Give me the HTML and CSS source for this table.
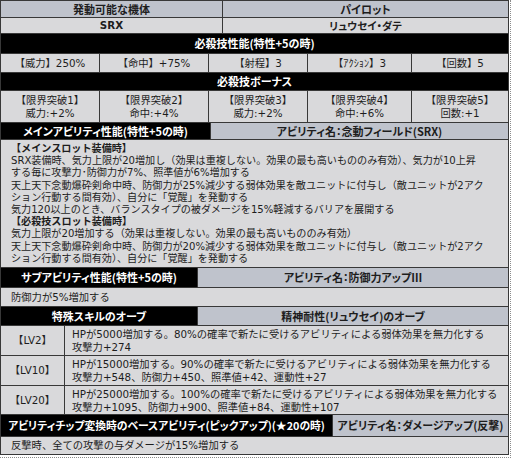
FILE: index.html
```html
<!DOCTYPE html>
<html lang="ja">
<head>
<meta charset="utf-8">
<title>SRX</title>
<link rel="stylesheet" href="styles.css">
</head>
<body>
<div class="frame">
  <div class="tbl">
    <div class="row cols-2 h17">
      <div class="c head b">発動可能な機体</div>
      <div class="c head b">パイロット</div>
    </div>
    <div class="row cols-2 h16">
      <div class="c b">SRX</div>
      <div class="c b kana">リュウセイ・ダテ</div>
    </div>
    <div class="row h20">
      <div class="c dark b">必殺技性能(特性+5の時)</div>
    </div>
    <div class="row cols-5 h19">
      <div class="c">【威力】250%</div>
      <div class="c">【命中】+75%</div>
      <div class="c">【射程】3</div>
      <div class="c">【ｱｸｼｮﾝ】3</div>
      <div class="c">【回数】5</div>
    </div>
    <div class="row h18">
      <div class="c dark b">必殺技ボーナス</div>
    </div>
    <div class="row cols-5 h32">
      <div class="c stack"><span>【限界突破1】</span><span>威力:+2%</span></div>
      <div class="c stack"><span>【限界突破2】</span><span>命中:+4%</span></div>
      <div class="c stack"><span>【限界突破3】</span><span>威力:+2%</span></div>
      <div class="c stack"><span>【限界突破4】</span><span>命中:+6%</span></div>
      <div class="c stack"><span>【限界突破5】</span><span>回数:+1</span></div>
    </div>
    <div class="row cols-main h17">
      <div class="c dark b">メインアビリティ性能(特性+5の時)</div>
      <div class="c head b">アビリティ名：念動フィールド(SRX)</div>
    </div>
    <div class="row h128">
      <div class="c text main">
        <p class="b">【メインスロット装備時】</p>
        <p>SRX装備時、気力上限が20増加し（効果は重複しない。効果の最も高いもののみ有効）、気力が10上昇</p>
        <p>する毎に攻撃力･防御力が7%、照準値が6%増加する</p>
        <p>天上天下念動爆砕剣命中時、防御力が25%減少する弱体効果を敵ユニットに付与し（敵ユニットが2アク</p>
        <p>ション行動する間有効）、自分に「覚醒」を発動する</p>
        <p>気力120以上のとき、バランスタイプの被ダメージを15%軽減するバリアを展開する</p>
        <p class="b">【必殺技スロット装備時】</p>
        <p>気力上限が20増加する（効果は重複しない。効果の最も高いもののみ有効）</p>
        <p>天上天下念動爆砕剣命中時、防御力が20%減少する弱体効果を敵ユニットに付与し（敵ユニットが2アク</p>
        <p>ション行動する間有効）、自分に「覚醒」を発動する</p>
      </div>
    </div>
    <div class="row cols-sub h20">
      <div class="c dark b">サブアビリティ性能(特性+5の時)</div>
      <div class="c head b">アビリティ名：防御力アップⅢ</div>
    </div>
    <div class="row h19">
      <div class="c text single">防御力が5%増加する</div>
    </div>
    <div class="row cols-sub h19">
      <div class="c dark b">特殊スキルのオーブ</div>
      <div class="c head b">精神耐性(リュウセイ)のオーブ</div>
    </div>
    <div class="row cols-lv h30">
      <div class="c">【LV2】</div>
      <div class="c text lv">
        <p>HPが5000増加する。80%の確率で新たに受けるアビリティによる弱体効果を無力化する</p>
        <p>攻撃力+274</p>
      </div>
    </div>
    <div class="row cols-lv h30">
      <div class="c">【LV10】</div>
      <div class="c text lv">
        <p>HPが15000増加する。90%の確率で新たに受けるアビリティによる弱体効果を無力化する</p>
        <p>攻撃力+548、防御力+450、照準値+42、運動性+27</p>
      </div>
    </div>
    <div class="row cols-lv h29">
      <div class="c">【LV20】</div>
      <div class="c text lv">
        <p>HPが25000増加する。100%の確率で新たに受けるアビリティによる弱体効果を無力化する</p>
        <p>攻撃力+1095、防御力+900、照準値+84、運動性+107</p>
      </div>
    </div>
    <div class="row cols-chip h22">
      <div class="c dark b chip">アビリティチップ変換時のベースアビリティ(ピックアップ)(★20の時)</div>
      <div class="c head b">アビリティ名：ダメージアップ(反撃)</div>
    </div>
    <div class="row h18">
      <div class="c text single">反撃時、全ての攻撃の与ダメージが15%増加する</div>
    </div>
  </div>
</div>
</body>
</html>
```

FILE: styles.css
```css
* {
  box-sizing: border-box;
  margin: 0;
  padding: 0;
}

body {
  margin: 0;
  background: #ffffff;
  font-family: "DejaVu Sans", "Noto Sans CJK JP", sans-serif;
  font-size: 10.3px;
  color: #1d1d1d;
}

.frame {
  width: 511px;
  padding: 0 1px 2px 0;
  border-right: 1px dotted #8c8c8c;
  border-bottom: 1px dotted #8c8c8c;
}

.tbl {
  width: 509px;
  border: 1px solid #383838;
  border-bottom: none;
  background: #d9d9db;
}

.row {
  display: grid;
  grid-template-columns: 1fr;
  border-bottom: 1px solid #383838;
}

.cols-2 { grid-template-columns: 222px 1fr; }
.cols-5 { grid-template-columns: 99px 109px 99px 104px 1fr; }
.cols-main { grid-template-columns: 210px 1fr; }
.cols-sub { grid-template-columns: 197px 1fr; }
.cols-lv { grid-template-columns: 64px 1fr; }
.cols-chip { grid-template-columns: 332px 1fr; }

.h16 { height: 16px; }
.h17 { height: 17px; }
.h18 { height: 18px; }
.h19 { height: 19px; }
.h20 { height: 20px; }
.h22 { height: 22px; }
.h29 { height: 29px; }
.h30 { height: 30px; }
.h32 { height: 32px; }
.h128 { height: 128px; }

.c {
  display: flex;
  align-items: center;
  justify-content: center;
  text-align: center;
  white-space: nowrap;
  line-height: 13px;
  border-right: 1px solid #383838;
  overflow: hidden;
}

.c:last-child {
  border-right: none;
}

.b {
  font-weight: bold;
}

.kana {
  font-family: "Noto Sans CJK JP", sans-serif;
  font-feature-settings: "palt";
  font-size: 10.5px;
}

.head {
  background: #bfc3cc;
  font-family: "Noto Sans CJK JP", sans-serif;
  font-feature-settings: "palt";
  font-size: 11px;
}

.dark {
  background: #000000;
  color: #ffffff;
  font-family: "Noto Sans CJK JP", sans-serif;
  font-feature-settings: "palt";
  font-size: 11px;
}

.chip {
  font-size: 10.8px;
}

.stack {
  flex-direction: column;
  line-height: 12.5px;
}

.text {
  display: block;
  text-align: left;
}

.main {
  padding: 3px 0 0 10px;
  line-height: 12.2px;
  font-size: 10.1px;
}

.single {
  display: flex;
  justify-content: flex-start;
  padding-left: 10px;
}

.lv {
  padding: 2px 0 0 7px;
  line-height: 13px;
}
```
